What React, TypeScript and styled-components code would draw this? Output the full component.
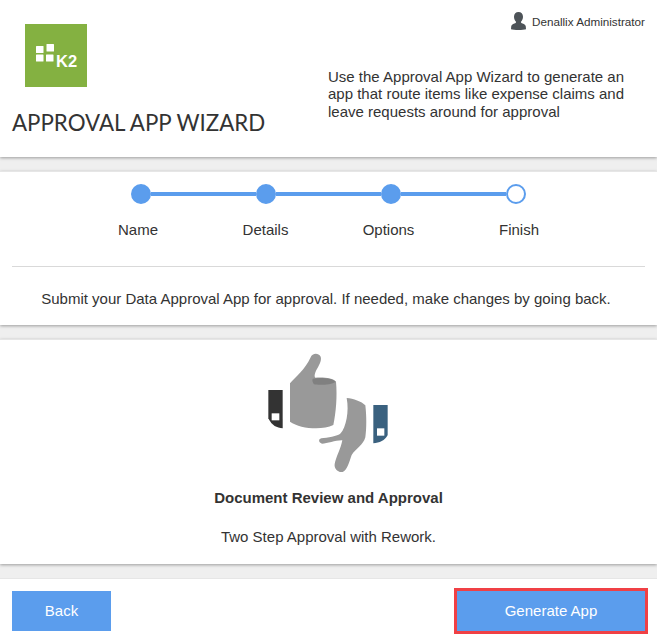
import styled, { createGlobalStyle } from "styled-components";

const GlobalStyle = createGlobalStyle`
  html, body {
    margin: 0;
    padding: 0;
    background: #efefef;
  }
  * {
    box-sizing: border-box;
  }
  body {
    font-family: "Liberation Sans", Arial, sans-serif;
    color: #333;
  }
`;

const Page = styled.div`
  width: 657px;
  height: 643px;
  overflow: hidden;
  display: flex;
  flex-direction: column;
  gap: 14px;
  background: #efefef;
`;

const Panel = styled.section<{ $height: number }>`
  height: ${(p) => p.$height}px;
  flex: none;
  background: #fff;
  border-top: 1px solid #e6e6e6;
  box-shadow: 0 1px 3px rgba(0, 0, 0, 0.35);
`;

// ------- header -------

const Header = styled(Panel)`
  border-top: 0;
  display: grid;
  grid-template-columns: 328px 1fr;
`;

const Brand = styled.div`
  padding: 24px 0 0 12px;
`;

const Logo = styled.div`
  position: relative;
  width: 62px;
  height: 63px;
  margin-left: 13px;
  background: #84b141;
`;

const LogoMark = styled.svg`
  position: absolute;
  left: 11px;
  top: 20px;
`;

const LogoText = styled.span`
  position: absolute;
  left: 31px;
  top: 28px;
  font-size: 16.5px;
  line-height: 18px;
  font-weight: 700;
  color: #fff;
`;

const Title = styled.h1`
  margin: 22px 0 0;
  font-family: Lato, sans-serif;
  font-size: 22.3px;
  line-height: 27px;
  font-weight: 400;
  white-space: nowrap;
  color: #333;
`;

const Intro = styled.div`
  display: flex;
  flex-direction: column;
`;

const UserRow = styled.div`
  display: flex;
  justify-content: flex-end;
  align-items: center;
  gap: 6px;
  height: 18px;
  margin-top: 12px;
  padding-right: 12px;
  font-size: 11.7px;
  white-space: nowrap;
`;

const IntroText = styled.p`
  margin: 37.5px 0 0;
  font-size: 15px;
  line-height: 17.5px;
  width: 310px;
`;

// ------- stepper -------

const Stepper = styled.div`
  display: flex;
  align-items: center;
  padding: 12px 0 0 131px;
`;

const Dot = styled.span<{ $open?: boolean }>`
  flex: none;
  width: 20px;
  height: 20px;
  border-radius: 50%;
  border: 2px solid #5b9ded;
  background: ${(p) => (p.$open ? "#fff" : "#5b9ded")};
`;

const Connector = styled.span`
  flex: none;
  width: 105px;
  height: 4px;
  background: #5b9ded;
`;

const StepLabels = styled.div`
  display: grid;
  grid-template-columns: repeat(4, 125px);
  margin: 17px 0 0 78px;
`;

const StepLabel = styled.span<{ $shift: number }>`
  text-align: center;
  font-size: 15px;
  line-height: 17px;
  transform: translateX(${(p) => p.$shift}px);
`;

const Divider = styled.hr`
  margin: 28px 12px 0;
  border: 0;
  border-top: 1px solid #d9d9d9;
`;

const Hint = styled.p`
  margin: 23px 0 0;
  text-align: center;
  padding-right: 5px;
  font-size: 15px;
  line-height: 17px;
`;

// ------- template card -------

const Template = styled(Panel)`
  display: flex;
  flex-direction: column;
  align-items: center;
`;

const Thumbs = styled.svg`
  display: block;
  margin-left: -7px;
`;

const TemplateName = styled.h2`
  margin: 9px 0 0;
  font-size: 15px;
  line-height: 17px;
  font-weight: 700;
`;

const TemplateNote = styled.p`
  margin: 22px 0 0;
  font-size: 15px;
  line-height: 17px;
`;

// ------- footer -------

const Footer = styled.footer`
  flex: 1;
  display: flex;
  justify-content: space-between;
  align-items: flex-start;
  padding: 9px 9px 0 12px;
  background: #fff;
  border-top: 1px solid #e6e6e6;
`;

const Button = styled.button<{ $width: number; $focused?: boolean }>`
  width: ${(p) => p.$width}px;
  height: ${(p) => (p.$focused ? 46 : 40)}px;
  margin-top: ${(p) => (p.$focused ? 0 : 3)}px;
  border: ${(p) => (p.$focused ? "3px solid #f04045" : "0")};
  padding: 0 0 2px;
  background: #5b9ded;
  color: #fff;
  font-family: inherit;
  font-size: 15px;
  cursor: pointer;
`;

const steps = [
  { name: "Name", shift: -2.5 },
  { name: "Details", shift: 0 },
  { name: "Options", shift: -2 },
  { name: "Finish", shift: 3.5 },
];

const App = () => {
  return (
    <Page>
      <GlobalStyle />

      <Header $height={157}>
        <Brand>
          <Logo>
            <LogoMark width="20" height="20" viewBox="0 0 20 20" fill="#fff">
              <rect x="0" y="2" width="7.5" height="7" rx="0.5" />
              <rect x="10.5" y="0" width="7.5" height="7.5" rx="0.5" />
              <rect x="0" y="10.5" width="7.5" height="7" rx="0.5" />
              <rect x="10" y="10.5" width="7.5" height="7" rx="0.5" />
            </LogoMark>
            <LogoText>K2</LogoText>
          </Logo>
          <Title>APPROVAL APP WIZARD</Title>
        </Brand>
        <Intro>
          <UserRow>
            <svg width="15" height="18" viewBox="0 0 15 18" fill="#4d5358">
              <path d="M7.500 0C4.800 0 3 1.900 3 4.700 3 6.800 3.800 8.600 5 9.700 5.100 10.600 4.600 11 3.400 11.500 1.500 12.200.4 13 .2 14.500L0 17.200C2.500 18.200 12.500 18.200 15 17.200L14.800 14.500C14.600 13 13.500 12.200 11.600 11.500 10.400 11 9.900 10.600 10 9.700 11.200 8.600 12 6.800 12 4.700 12 1.900 10.200 0 7.500 0Z" />
            </svg>
            Denallix Administrator
          </UserRow>
          <IntroText>
            Use the Approval App Wizard to generate an app that route items like
            expense claims and leave requests around for approval
          </IntroText>
        </Intro>
      </Header>

      <Panel $height={154}>
        <Stepper>
          <Dot />
          <Connector />
          <Dot />
          <Connector />
          <Dot />
          <Connector />
          <Dot $open />
        </Stepper>
        <StepLabels>
          {steps.map((step) => (
            <StepLabel key={step.name} $shift={step.shift}>
              {step.name}
            </StepLabel>
          ))}
        </StepLabels>
        <Divider />
        <Hint>
          Submit your Data Approval App for approval. If needed, make changes by
          going back.
        </Hint>
      </Panel>

      <Template $height={225}>
        <Thumbs width="150" height="140" viewBox="0 0 450 420">
          <path fill="#333" d="M55 150H98V265C80 263 66 258 55 235Z" />
          <rect x="65" y="220" width="23" height="21" fill="#fff" />
          <path
            fill="#999"
            d="M182 52C186 40 204 36 212 50C216 62 206 78 198 92C194 102 192 108 196 113C220 111 250 114 258 125C262 170 258 215 250 255C215 272 150 266 120 245V130C135 112 165 90 182 52Z"
          />
          <path
            fill="#808080"
            d="M188 116C210 112 245 114 257 125C245 135 205 136 192 133C188 128 186 122 188 116Z"
          />
          <path
            fill="#999"
            d="M290 174C310 176 335 184 346 196C350 230 350 265 346 292C340 315 318 325 305 345C298 365 292 390 278 396C262 398 252 385 254 372C258 350 272 328 277 301C258 300 232 311 216 311C206 308 204 298 214 295C232 293 262 290 272 280C288 262 298 215 290 174Z"
          />
          <path fill="#3a617f" d="M370 195H413V285C405 302 388 308 370 310Z" />
          <rect x="381" y="265" width="22" height="22" fill="#fff" />
        </Thumbs>
        <TemplateName>Document Review and Approval</TemplateName>
        <TemplateNote>Two Step Approval with Rework.</TemplateNote>
      </Template>

      <Footer>
        <Button $width={99}>Back</Button>
        <Button $width={194} $focused>
          Generate App
        </Button>
      </Footer>
    </Page>
  );
};

export default App;
